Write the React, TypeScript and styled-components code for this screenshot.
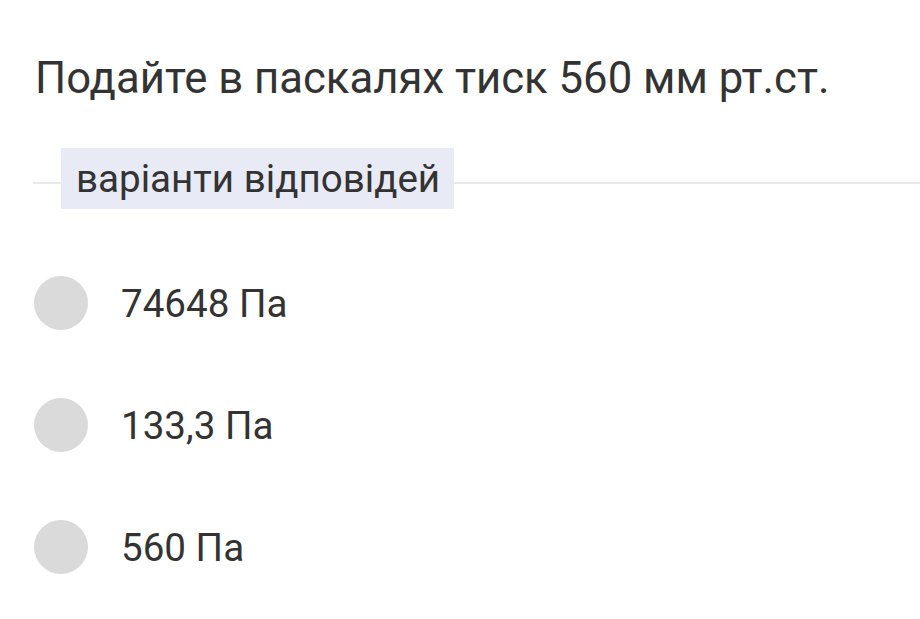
import React from "react";
import styled, { createGlobalStyle } from "styled-components";

const Global = createGlobalStyle`
  html, body { margin: 0; padding: 0; background: #ffffff; }
  body { font-family: Roboto, "Noto Sans", Arial, sans-serif; color: #333333; }
`;

const Page = styled.div`
  width: 920px;
  height: 619px;
  overflow: hidden;
  padding-left: 35px;
  box-sizing: border-box;
`;

const Question = styled.h1`
  margin: 52px 0 0 0;
  font-size: 43.7px;
  line-height: 52px;
  font-weight: 400;
  color: #333333;
  white-space: nowrap;
`;

const Divider = styled.div`
  display: flex;
  align-items: flex-start;
  margin-top: 44px;
  margin-left: -2px;
`;

const Rule = styled.div<{ $grow?: boolean; $w?: number }>`
  height: 2px;
  margin-top: 34px;
  background: #e9e9e9;
  ${(p) => (p.$grow ? "flex: 1;" : `width: ${p.$w}px;`)}
`;

const Badge = styled.div`
  background: #e8eaf6;
  height: 61px;
  padding: 0 14px 0 15px;
  display: flex;
  align-items: center;
  font-size: 38.6px;
  color: #333333;
  white-space: nowrap;
`;

const Options = styled.div`
  display: flex;
  flex-direction: column;
  gap: 68px;
  margin-top: 67px;
  margin-left: -1px;
`;

const Option = styled.label`
  display: flex;
  align-items: center;
  gap: 33px;
  height: 54px;
  font-size: 38.6px;
  color: #333333;
`;

const Radio = styled.span`
  width: 54px;
  height: 54px;
  border-radius: 50%;
  background: #dadada;
  flex-shrink: 0;
`;

const answers = ["74648 Па", "133,3 Па", "560 Па"];

export default function App() {
  return (
    <Page>
      <Global />
      <Question>Подайте в паскалях тиск 560 мм рт.ст.</Question>
      <Divider>
        <Rule $w={28} />
        <Badge>варіанти відповідей</Badge>
        <Rule $grow />
      </Divider>
      <Options>
        {answers.map((a) => (
          <Option key={a}>
            <Radio />
            {a}
          </Option>
        ))}
      </Options>
    </Page>
  );
}
